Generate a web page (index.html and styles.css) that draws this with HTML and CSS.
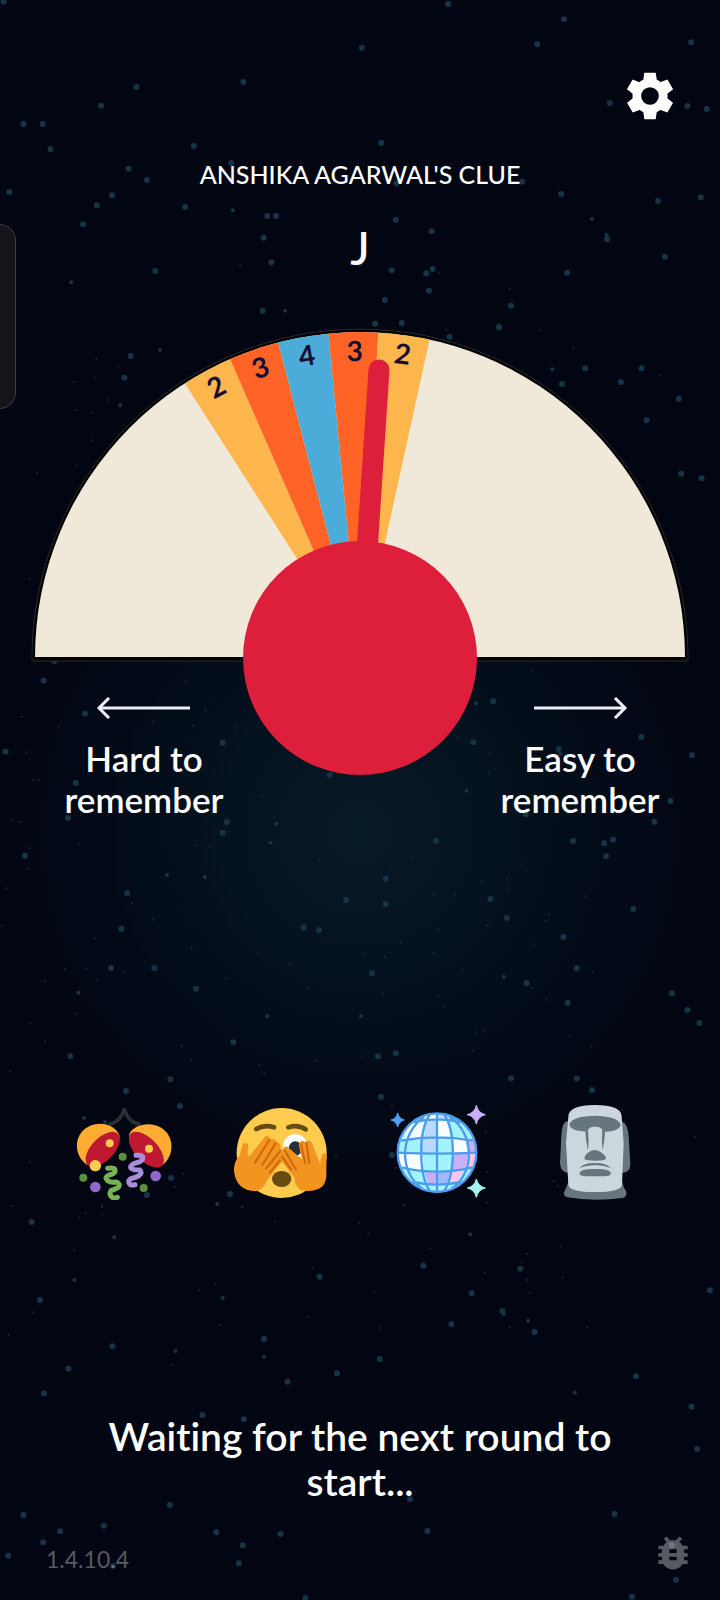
FILE: index.html
```html
<!DOCTYPE html>
<html lang="en">
<head>
<meta charset="utf-8">
<meta name="viewport" content="width=device-width, initial-scale=1">
<title>Waiting for the next round</title>
<link rel="stylesheet" href="styles.css">
</head>
<body>
<svg class="stars" viewBox="0 0 720 1600" preserveAspectRatio="xMidYMin slice" aria-hidden="true">
  <g transform="scale(.4592 .3333)">
    <path class="star-lg" d="M8 5h0M976 12h0M1228 58h0M1170 133h0M1505 127h0M788 143h0M530 246h0M297 261h0M220 317h0M51 372h0M93 372h0M110 448h0M422 438h0M830 429h0M1328 309h0M1497 318h0M1539 327h0M503 489h0M280 506h0M320 540h0M20 576h0M244 586h0M211 616h0M403 621h0M181 673h0M863 550h0M1137 545h0M1222 582h0M1433 603h0M1526 592h0M582 648h0M601 648h0M862 659h0M940 694h0M574 713h0M1322 718h0M1448 770h0M591 787h0M338 813h0M853 811h0M928 820h0M942 807h0M1235 818h0M934 872h0M838 900h0M1113 917h0M572 932h0M817 971h0M875 969h0M1087 981h0M783 789h0"/>
    <path class="star-md" d="M507 631h0M1289 657h0M155 847h0M621 932h0M1321 705h0"/>
    <path class="star-sm" d="M523 795h0M956 818h0M1110 867h0M972 989h0"/>
  </g>
  <g transform="translate(0 310) scale(.3333)">
    <path class="star-lg" d="M392 138h0M373 203h0M1497 52h0M1349 80h0M1756 175h0M1686 222h0M1925 175h0M1863 216h0M2037 266h0M1940 331h0M2044 491h0M2105 505h0M163 1054h0"/>
    <path class="star-md" d="M1657 178h0M361 286h0M480 119h0"/>
    <path class="star-sm" d="M289 147h0M355 169h0M221 216h0M284 203h0M324 270h0M228 300h0M275 309h0M275 391h0M230 467h0M111 488h0M89 807h0M1620 61h0M1721 114h0M1981 195h0"/>
  </g>
  <g transform="translate(0 640) scale(.4592 .3333)">
    <path class="star-lg" d="M95 122h0M185 221h0M12 335h0M485 308h0M165 429h0M148 534h0M494 546h0M485 578h0M54 647h0M277 760h0M264 866h0M242 984h0M336 984h0M427 1046h0M508 1207h0M153 1249h0M718 405h0M1074 184h0M1031 307h0M1397 291h0M1217 327h0M1507 346h0M1460 483h0M1425 545h0M1145 523h0M1335 599h0M1316 610h0M1248 603h0M1320 649h0M949 602h0M840 716h0M754 780h0M840 792h0M1068 777h0M1379 807h0M1104 834h0M661 862h0M695 870h0M1227 891h0M810 1000h0M1256 985h0M1147 1030h0M1463 1060h0M1236 1088h0M1497 1110h0M1523 1149h0M862 1240h0M823 1249h0M1113 1315h0M1256 1316h0M371 1318h0"/>
    <path class="star-md" d="M364 705h0M446 711h0M582 1129h0M786 1129h0M1220 342h0M1036 190h0M589 608h0M602 551h0M1097 1010h0M171 1058h0M1016 452h0"/>
    <path class="star-sm" d="M47 231h0M128 263h0M405 126h0M447 211h0M334 245h0M420 257h0M514 264h0M58 337h0M84 419h0M73 419h0M26 541h0M43 546h0M64 624h0M61 687h0M14 745h0M4 858h0M173 614h0M428 616h0M457 619h0M287 790h0M333 839h0M206 895h0M417 923h0M141 988h0M187 986h0M271 995h0M98 1023h0M212 1020h0M166 1121h0M66 1150h0M98 1205h0M396 1217h0M416 1262h0M22 1294h0M561 937h0M631 972h0M493 1017h0M670 1044h0M570 467h0M695 659h0M762 680h0M850 687h0M896 655h0M1138 673h0M1048 725h0M1104 716h0M1106 744h0M945 763h0M990 766h0M1274 769h0M1195 824h0M1189 843h0M1061 856h0M955 871h0M873 908h0M944 938h0M1163 913h0M838 951h0M795 942h0M1007 991h0M1290 995h0M1158 1044h0M1190 1079h0M834 1061h0M966 1098h0M954 1070h0M1055 1170h0M1037 1177h0M1241 1189h0M1288 1219h0M1029 1233h0M788 1249h0M688 1263h0M565 1275h0M575 1300h0M1160 90h0M1068 343h0M1065 399h0M997 295h0"/>
  </g>
  <g>
    <path class="star-lg" d="M126 1091h0M180 1106h0M392 1155h0M592 1090h0M147 1195h0M171 1178h0M230 1194h0M381 1097h0"/>
    <path class="star-md" d="M84 1118h0M105 1122h0"/>
    <path class="star-sm" d="M183 1174h0M175 1187h0M242 1207h0M336 1156h0M486 1132h0M487 1172h0M396 1168h0M554 1181h0M558 1186h0M392 1106h0M404 1205h0M102 1206h0M695 1137h0M30 1162h0"/>
  </g>
  <g transform="translate(0 1200) scale(.4592 .3333)">
    <path class="star-lg" d="M69 66h0M696 230h0M922 197h0M1133 206h0M1027 280h0M1546 271h0M87 300h0M1094 333h0M983 373h0M1164 396h0M575 416h0M245 439h0M149 506h0M827 477h0M734 520h0M626 545h0M1385 529h0M96 580h0M1506 620h0M441 645h0M531 658h0M1518 747h0M893 897h0M370 914h0M51 945h0M226 977h0M131 994h0M94 1027h0M471 997h0M611 1002h0M529 1036h0M931 993h0M1338 942h0M18 1067h0M520 1090h0M246 1098h0M1463 1036h0M1472 1139h0M1376 1190h0M665 1194h0M1178 747h0"/>
    <path class="star-md" d="M249 112h0M473 12h0M1024 103h0M162 240h0M485 294h0M382 453h0M575 470h0M1150 362h0M1252 578h0M1097 342h0"/>
    <path class="star-sm" d="M25 18h0M222 20h0M222 43h0M186 39h0M173 54h0M528 22h0M879 14h0M1060 8h0M599 64h0M782 68h0M802 102h0M161 151h0M936 145h0M1148 162h0M1222 139h0M1136 187h0M1056 217h0M1148 240h0M1225 232h0M1154 278h0M681 204h0M468 253h0M433 270h0M815 275h0M72 337h0M670 351h0M479 375h0M827 384h0M1110 381h0M1279 381h0M19 404h0M373 495h0"/>
  </g>
</svg>
<div class="side-panel" aria-hidden="true"></div>

<main class="screen">
  <header class="topbar">
    <button class="icon-btn" type="button" aria-label="Settings">
      <svg viewBox="0 0 24 24" width="56" height="56" fill="currentColor"><path d="M19.44 12.99l.01.02c.04-.33.08-.67.08-1.01 0-.34-.03-.66-.07-.99l-.01.02 2.44-1.92-2.43-4.22-2.87 1.16.01.01c-.52-.4-1.09-.74-1.71-1h.01L14.44 2H9.57l-.44 3.07h.01c-.62.26-1.19.6-1.71 1l.01-.01-2.88-1.17-2.44 4.22 2.44 1.92.01-.02c-.04.33-.07.65-.07.99 0 .34.03.68.08 1.01l.01-.02-2.1 1.65-.33.26 2.43 4.2 2.88-1.15-.02-.04c.53.41 1.1.75 1.73 1.01h-.03L9.58 22h4.85s.03-.18.06-.42l.38-2.65h-.01c.62-.26 1.2-.6 1.73-1.01l-.02.04 2.88 1.15 2.43-4.2s-.14-.12-.33-.26l-2.11-1.66zM12 15.8a3.8 3.8 0 1 1 0-7.6 3.8 3.8 0 0 1 0 7.6z"/></svg>
    </button>
  </header>

  <section class="clue">
    <h1 class="clue-owner">ANSHIKA AGARWAL'S CLUE</h1>
    <p class="clue-word">J</p>
  </section>

  <svg class="dial" viewBox="31 328 658 333" role="img" aria-label="Scoring dial">
    <path class="dial-rim" d="M32 661V658A328 329 0 0 1 688 658V661Z"/>
    <clipPath id="face"><path d="M35 657A325 325 0 0 1 685 657Z"/></clipPath>
    <g clip-path="url(#face)">
      <path fill="#f0e9da" d="M30 320h660v340H30z"/>
      <path fill="#ffb64d" d="M360 657L173 365L224 345Z"/>
      <path fill="#ff6426" d="M360 657L224 345L273 323Z"/>
      <path fill="#4cacd9" d="M360 657L273 323L327 319Z"/>
      <path fill="#ff6426" d="M360 657L327 319L379 319Z"/>
      <path fill="#ffb64d" d="M360 657L379 319L434 319Z"/>
    </g>
    <g class="dial-num">
      <text transform="translate(360 657) rotate(-28) translate(0 -296)">2</text>
      <text transform="translate(360 657) rotate(-19) translate(0 -296)">3</text>
      <text transform="translate(360 657) rotate(-10) translate(0 -296)">4</text>
      <text transform="translate(360 657) rotate(-1) translate(0 -296)">3</text>
      <text transform="translate(360 657) rotate(8) translate(0 -296)">2</text>
    </g>
    <path class="needle" d="M360 657L379 370"/>
    <circle cx="360" cy="658" r="117" fill="#dd1f3b"/>
  </svg>

  <section class="ends">
    <div class="end">
      <svg class="arrow" viewBox="0 0 96 22"><path d="M94 11H3M13 1L3 11L13 21"/></svg>
      <p class="end-label">Hard to remember</p>
    </div>
    <div class="end">
      <svg class="arrow" viewBox="0 0 96 22"><path d="M2 11H93M83 1L93 11L83 21"/></svg>
      <p class="end-label">Easy to remember</p>
    </div>
  </section>

  <section class="reactions" aria-label="Reactions">
    <button class="icon-btn" type="button" aria-label="Confetti ball">
      <svg viewBox="49 42 288 288" width="96" height="96">
        <path d="M146 104Q182 98 194 58Q206 98 242 104" fill="none" stroke="#292f33" stroke-width="11" stroke-linejoin="round"/>
        <path d="M82 224C40 196 42 132 86 110C122 92 166 104 179 136C186 170 120 236 82 224Z" fill="#ffac33"/>
        <ellipse cx="129" cy="178" rx="65" ry="34" transform="rotate(-46 129 178)" fill="#be1931"/>
        <path d="M305 228C346 200 346 136 302 112C270 94 222 104 209 132C200 168 268 240 305 228Z" fill="#ffac33"/>
        <ellipse cx="260" cy="179" rx="67" ry="34" transform="rotate(46 260 179)" fill="#be1931"/>
        <g fill="#ffcc4d"><circle cx="150" cy="160" r="12"/><circle cx="268" cy="176" r="12"/><circle cx="107" cy="227" r="17"/></g>
        <g fill="#5c913b"><circle cx="189" cy="200" r="12"/><circle cx="71" cy="263" r="12"/><circle cx="252" cy="294" r="12"/></g>
        <g fill="#9266cc"><circle cx="107" cy="291" r="16"/><circle cx="288" cy="258" r="16"/></g>
        <path d="M144 235Q168 231 166 244Q164 252 148 255Q132 262 144 272Q154 279 168 276Q184 280 176 292Q164 299 154 302Q146 316 160 323Q166 326 173 322" fill="none" stroke="#77b255" stroke-width="15" stroke-linecap="round"/>
        <path d="M229 196Q252 193 249 207Q246 215 225 220Q204 231 220 238Q230 240 240 240Q250 247 238 257Q228 262 214 266Q202 274 211 283Q217 287 226 284" fill="none" stroke="#aa8dd8" stroke-width="15" stroke-linecap="round"/>
      </svg>
    </button>
    <button class="icon-btn" type="button" aria-label="Peeking face">
      <svg viewBox="40 42 288 288" width="96" height="96">
        <circle cx="186" cy="189" r="135" fill="#ffcc4d"/>
        <path d="M110 117Q134 103 163 112M206 112Q234 102 258 118" fill="none" stroke="#664b12" stroke-width="14" stroke-linecap="round"/>
        <circle cx="227" cy="168" r="36" fill="#fff"/>
        <ellipse cx="227" cy="176" rx="20" ry="22" fill="#292f33"/>
        <ellipse cx="186" cy="267" rx="29" ry="24" fill="#664b12"/>
        <path d="M43 242Q42 214 60 197L68 166Q73 155 84 162Q88 168 83 188L88 200L135 142Q144 133 150 143L154 148Q166 142 171 155Q188 163 181 175Q193 178 185 190Q196 205 184 218L142 270Q134 298 108 304Q48 300 43 242Z" fill="#f39320"/>
        <path d="M148 151L106 218M168 160L128 225M181 184L139 236M188 202L150 248" fill="none" stroke="#ca6a0c" stroke-width="6" stroke-linecap="round"/>
        <path d="M320 242Q320 212 322 199Q318 185 307 194L301 222L276 157Q267 146 258 157Q248 146 238 159Q236 170 249 210L204 171Q193 166 191 179Q180 184 184 193Q176 200 184 211L225 264Q224 287 244 300Q278 309 307 290Q323 274 320 242Z" fill="#f39320"/>
        <path d="M244 162L256 218M260 159L269 219M195 181L229 239M187 199L214 238" fill="none" stroke="#ca6a0c" stroke-width="6" stroke-linecap="round"/>
      </svg>
    </button>
    <button class="icon-btn" type="button" aria-label="Mirror ball">
      <svg viewBox="31 42 288 288" width="96" height="96">
        <clipPath id="ball"><circle cx="172" cy="188" r="119"/></clipPath>
        <g clip-path="url(#ball)">
          <path fill="#a3f3ff" d="M50 60h244v252H50z"/>
          <path fill="#b9d9ff" d="M136 88h36v57h-36zM78 142h49v48H78zM127 142h45v48h-45zM172 60h46v28h-46zM256 145h38v45h-38zM172 243h36v38h-36z"/>
          <path fill="#f8feff" d="M88 90h48L127 142L74 150ZM172 88h30L212 142L172 145ZM216 142H256L264 188L218 190ZM77 190H128L132 243L84 238ZM50 190H78V238H50ZM130 60h42v28h-42z"/>
          <path fill="#a3f3ff" d="M80 146L127 142V190H77ZM258 142L290 152V190H264Z"/>
          <path fill="#c8b0f8" d="M218 190H266L256 240L212 244ZM134 243H172V281H146ZM260 145L294 150V186H266Z"/>
          <path fill="#ffc5ea" d="M266 190H296V225L256 238ZM212 244L254 238L234 276H200Z"/>
          <path fill="#9fb8ff" d="M172 243H212L202 280H172Z"/>
        </g>
        <g fill="none" stroke="#4b9cec" stroke-width="7">
          <circle cx="172" cy="188" r="118"/>
          <path d="M172 70V306M150 74C116 124 116 250 150 302M194 74C228 124 228 250 194 302M134 80C60 130 56 246 128 296M210 80C284 130 288 246 216 296M102 96Q172 80 242 96M65 152Q172 132 279 152M55 188Q172 194 289 188M66 232Q172 258 278 232M100 276Q172 292 244 276"/>
        </g>
        <path d="M54 69Q58 86 74 90Q58 94 54 111Q50 94 34 90Q50 86 54 69Z" fill="#4da0f5" stroke="#4da0f5" stroke-width="3" stroke-linejoin="round"/>
        <path d="M290 46Q295 69 317 74Q295 79 290 102Q285 79 263 74Q285 69 290 46Z" fill="#c8b0f8" stroke="#c8b0f8" stroke-width="3" stroke-linejoin="round"/>
        <path d="M290 267Q295 289 317 294Q295 299 290 322Q285 299 263 294Q285 289 290 267Z" fill="#a3f3f3" stroke="#a3f3f3" stroke-width="3" stroke-linejoin="round"/>
      </svg>
    </button>
    <button class="icon-btn" type="button" aria-label="Moai">
      <svg viewBox="22 42 288 288" width="96" height="96">
        <path d="M82 94Q67 96 65 140L61 220Q63 248 84 248H250Q272 248 272 222L267 140Q264 98 246 95Z" fill="#67757f"/>
        <path d="M86 276Q80 294 73 307Q70 317 82 322Q166 336 252 323Q264 317 259 304Q251 294 248 276Z" fill="#67757f"/>
        <path d="M86 80Q86 46 166 45Q247 46 246 80L252 160L247 284Q244 306 166 306Q88 306 86 284L79 160Z" fill="#ccd6dd"/>
        <path d="M89 102Q100 78 166 77Q232 78 243 103Q242 124 196 125L194 150L189 182Q185 150 188 119Q182 109 166 110Q150 109 145 120Q149 150 145 184L139 150L137 124Q92 124 89 102Z" fill="#67757f"/>
        <path d="M135 208Q132 198 147 187Q166 172 186 188Q202 200 198 207Q195 212 167 212Q139 212 135 208Z" fill="#67757f"/>
        <path d="M119 234Q137 217 166 219Q196 217 214 234Q190 225 166 226Q142 225 119 234Z" fill="#67757f"/>
        <path d="M119 249Q124 236 166 237Q210 236 214 249Q214 259 194 259H139Q120 259 119 249Z" fill="#67757f"/>
      </svg>
    </button>
  </section>

  <p class="status" role="status">Waiting for the next round to start...</p>

  <footer class="footer">
    <span class="version">1.4.10.4</span>
    <button class="icon-btn" type="button" aria-label="Report a bug">
      <svg viewBox="0 0 24 24" width="44" height="44" fill="currentColor"><path d="M20 8h-2.810c-.45-.78-1.070-1.450-1.820-1.960L17 4.410 15.590 3l-2.170 2.170C12.960 5.060 12.490 5 12 5c-.49 0-.96.06-1.410.17L8.410 3 7 4.410l1.620 1.630C7.880 6.550 7.260 7.220 6.810 8H4v2h2.090c-.05.33-.09.66-.09 1v1H4v2h2v1c0 .34.04.67.09 1H4v2h2.810c1.040 1.790 2.970 3 5.190 3s4.150-1.210 5.190-3H20v-2h-2.090c.05-.33.09-.66.09-1v-1h2v-2h-2v-1c0-.34-.04-.67-.09-1H20V8zm-6 8h-4v-2h4v2zm0-4h-4v-2h4v2z"/></svg>
    </button>
  </footer>
</main>
</body>
</html>
```
FILE: styles.css
```css
* {
  box-sizing: border-box;
}

body {
  position: relative;
  margin: 0;
  min-height: 100vh;
  overflow-x: hidden;
  background: radial-gradient(circle at 50% 52%, #071a27 0, #05121f 140px, #030a17 260px, #020612 360px) #020612;
  color: #fff;
  font-family: Lato, "Open Sans", sans-serif;
  font-variant-ligatures: none;
}

h1,
p {
  margin: 0;
  font-weight: 600;
}

.stars {
  position: absolute;
  inset: 0;
  width: 100%;
  height: 100%;
}

.stars path {
  fill: none;
  stroke-linecap: round;
  vector-effect: non-scaling-stroke;
}

.star-lg {
  stroke: #173447;
  stroke-width: 6px;
}

.star-md {
  stroke: #1b3444;
  stroke-width: 4px;
}

.star-sm {
  stroke: #1f2b38;
  stroke-width: 2px;
}

.side-panel {
  position: absolute;
  top: 224px;
  left: -4px;
  width: 20px;
  height: 185px;
  border: 1px solid #3b3b45;
  border-radius: 0 16px 16px 0;
  background: #141519;
}

.screen {
  position: relative;
  display: flex;
  flex-direction: column;
  min-height: 100vh;
  padding: 68px 0 25px;
}

.icon-btn {
  display: block;
  padding: 0;
  border: 0;
  background: none;
  color: inherit;
  cursor: pointer;
}

.icon-btn svg {
  display: block;
}

.topbar {
  display: flex;
  justify-content: flex-end;
  padding: 0 42px;
}

.clue {
  padding: 34px 24px 52px;
  text-align: center;
}

.clue-owner {
  font-size: 25px;
  font-weight: 500;
  line-height: 32px;
}

.clue-word {
  margin-top: 30px;
  font-size: 46px;
  font-weight: 500;
  line-height: 56px;
}

.dial {
  display: block;
  margin: 0 31px;
  overflow: visible;
}

.dial-rim {
  fill: #000;
  stroke: #2a2a2a;
  stroke-width: 1px;
}

.dial-num {
  fill: #150d33;
  font-size: 28px;
  font-weight: 700;
  text-anchor: middle;
}

.needle {
  stroke: #dd1f3b;
  stroke-width: 21px;
  stroke-linecap: round;
}

.ends {
  display: flex;
  justify-content: space-between;
  padding: 36px 56px 0 60px;
}

.end {
  display: flex;
  flex-direction: column;
  align-items: center;
  gap: 19px;
  width: 168px;
}

.arrow {
  width: 96px;
  height: 22px;
  fill: none;
  stroke: #ececf2;
  stroke-width: 3px;
}

.end-label {
  font-size: 35px;
  line-height: 41px;
  text-align: center;
}

.reactions {
  display: grid;
  grid-template-columns: repeat(4, 1fr);
  justify-items: center;
  margin-top: 284px;
  padding: 0 47px 0 45px;
}

.status {
  margin-top: 214px;
  padding: 0 80px;
  font-size: 39px;
  line-height: 45px;
  text-align: center;
}

.footer {
  display: flex;
  align-items: flex-end;
  justify-content: space-between;
  margin-top: auto;
  padding: 0 25px 0 46px;
  color: rgba(255, 255, 255, 0.34);
}

.version {
  font-size: 23px;
  line-height: 32px;
}
```
